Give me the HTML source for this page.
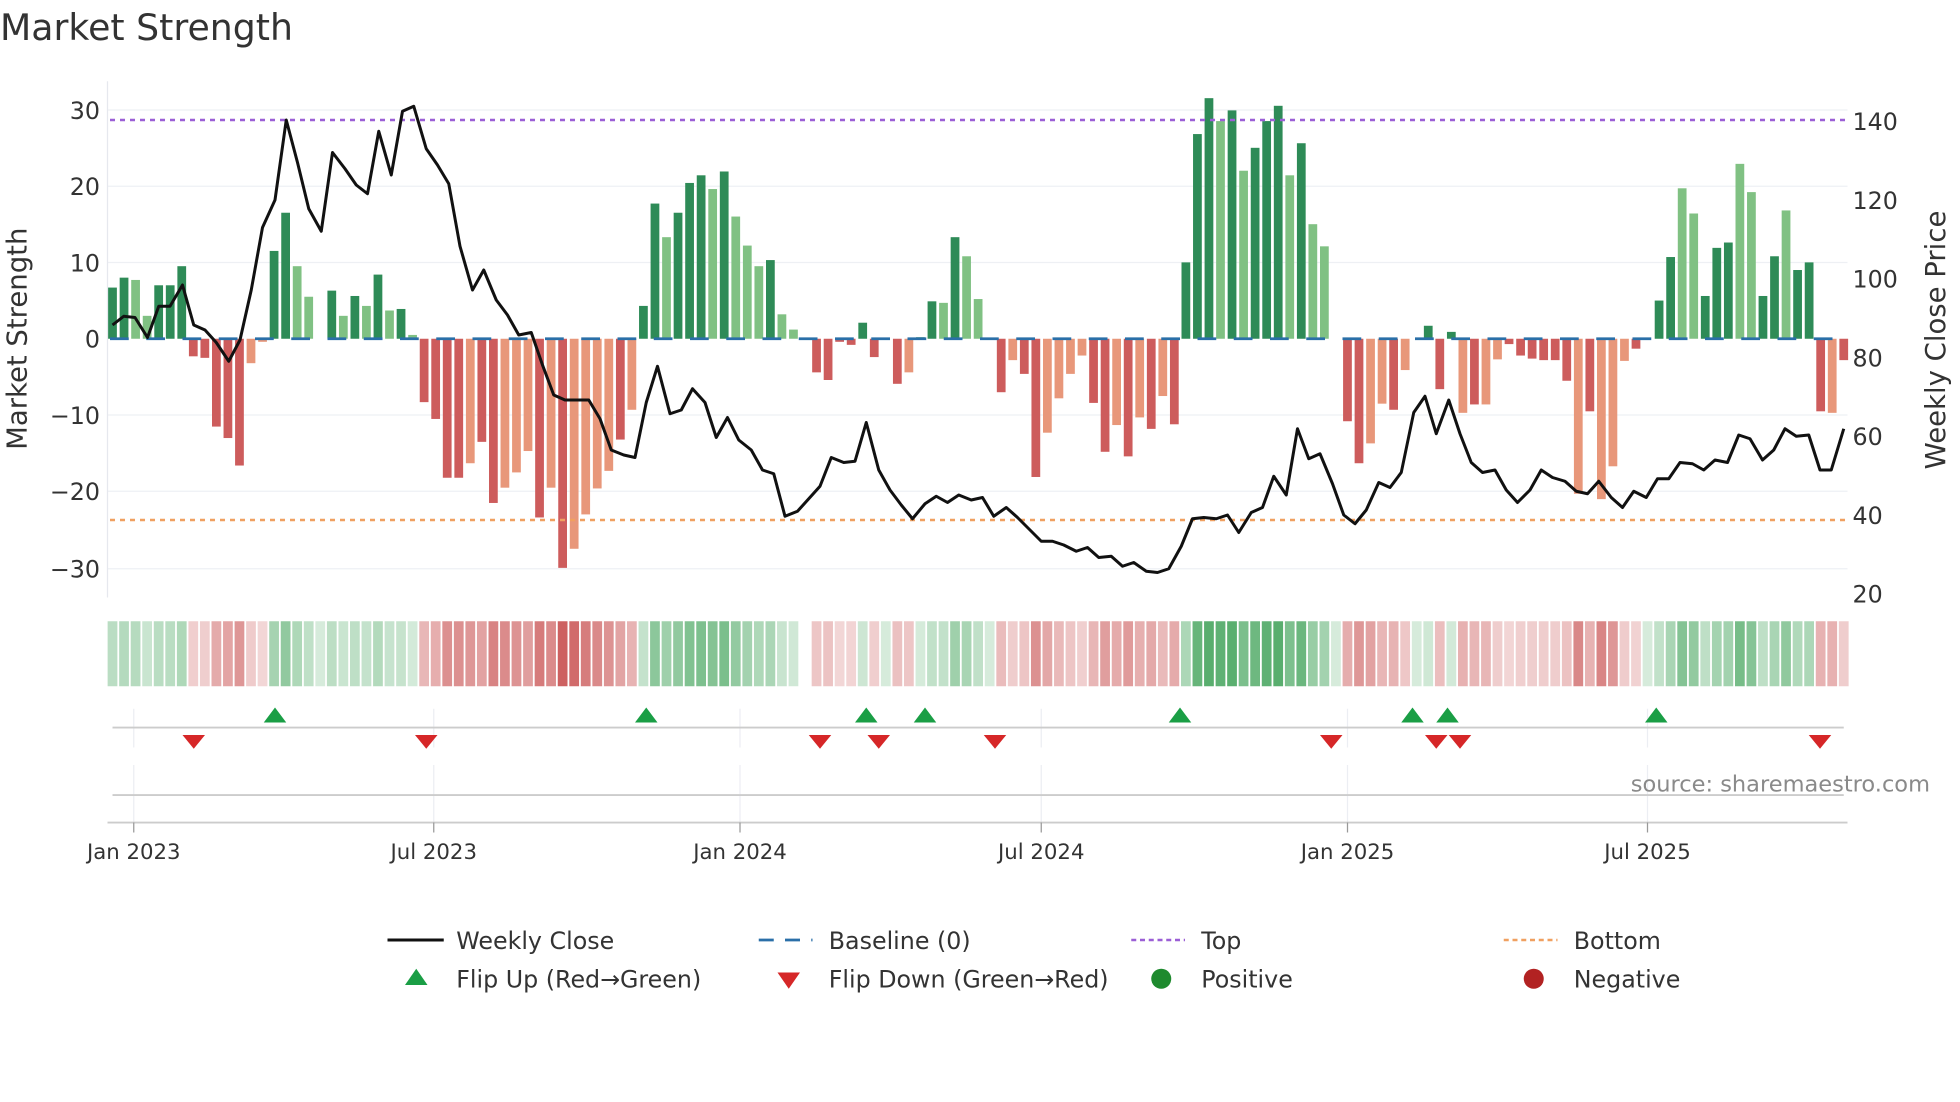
<!DOCTYPE html>
<html><head><meta charset="utf-8"><style>
html,body{margin:0;padding:0;background:#fff;width:1960px;height:1102px;overflow:hidden}
svg{display:block}
text{font-family:"DejaVu Sans","Liberation Sans",sans-serif;fill:#333}
</style></head><body>
<svg id="s" width="1960" height="1102" viewBox="0 0 1568 881.6" xmlns="http://www.w3.org/2000/svg">
<text x="0" y="32" font-size="29" fill="#333">Market Strength</text>
<g stroke="#eef0f4" stroke-width="1">
<line x1="86" x2="1478" y1="88" y2="88"/><line x1="86" x2="1478" y1="149" y2="149"/><line x1="86" x2="1478" y1="210" y2="210"/><line x1="86" x2="1478" y1="332" y2="332"/><line x1="86" x2="1478" y1="393" y2="393"/><line x1="86" x2="1478" y1="455" y2="455"/>
</g>
<line x1="86" x2="86" y1="65" y2="478" stroke="#e6e8ee"/>
<g id="bars"></g>
<g id="strip"></g>
<line x1="88" x2="1478" y1="271" y2="271" stroke="#2a6fa8" stroke-width="2.2" stroke-dasharray="15,14"/>
<line x1="88" x2="1478" y1="96" y2="96" stroke="#9b5fd6" stroke-width="2" stroke-dasharray="4,4"/>
<line x1="88" x2="1478" y1="416" y2="416" stroke="#f0a060" stroke-width="2" stroke-dasharray="4,4"/>
<polyline id="price" fill="none" stroke="#111" stroke-width="2.4" stroke-linejoin="round"/>
<g font-size="19" text-anchor="end">
<text x="80" y="95">30</text><text x="80" y="156">20</text><text x="80" y="217">10</text><text x="80" y="278">0</text><text x="80" y="339">−10</text><text x="80" y="400">−20</text><text x="80" y="462">−30</text>
</g>
<g font-size="19">
<text x="1482" y="104">140</text><text x="1482" y="167">120</text><text x="1482" y="230">100</text><text x="1482" y="293">80</text><text x="1482" y="356">60</text><text x="1482" y="419">40</text><text x="1482" y="482">20</text>
</g>
<text font-size="22" transform="translate(21,271) rotate(-90)" text-anchor="middle">Market Strength</text>
<text font-size="22" transform="translate(1556,272) rotate(-90)" text-anchor="middle">Weekly Close Price</text>
<g stroke="#eceef3" stroke-width="1">
<line x1="107" x2="107" y1="567" y2="598"/><line x1="347" x2="347" y1="567" y2="598"/><line x1="592" x2="592" y1="567" y2="598"/><line x1="833" x2="833" y1="567" y2="598"/><line x1="1078" x2="1078" y1="567" y2="598"/><line x1="1318" x2="1318" y1="567" y2="598"/>
<line x1="107" x2="107" y1="612" y2="658"/><line x1="347" x2="347" y1="612" y2="658"/><line x1="592" x2="592" y1="612" y2="658"/><line x1="833" x2="833" y1="612" y2="658"/><line x1="1078" x2="1078" y1="612" y2="658"/><line x1="1318" x2="1318" y1="612" y2="658"/>
</g>
<line x1="90" x2="1475" y1="582" y2="582" stroke="#ccc" stroke-width="1.5"/>
<line x1="90" x2="1475" y1="636" y2="636" stroke="#ccc" stroke-width="1.5"/>
<line x1="86" x2="1478" y1="658" y2="658" stroke="#ccc" stroke-width="1.5"/>
<g stroke="#999" stroke-width="1"><line x1="107" x2="107" y1="658" y2="666"/><line x1="347" x2="347" y1="658" y2="666"/><line x1="592" x2="592" y1="658" y2="666"/><line x1="833" x2="833" y1="658" y2="666"/><line x1="1078" x2="1078" y1="658" y2="666"/><line x1="1318" x2="1318" y1="658" y2="666"/></g>
<g id="marks"></g>
<text x="1544" y="633" font-size="18" style="fill:#8a8a8a" text-anchor="end">source: sharemaestro.com</text>
<g font-size="17" text-anchor="middle">
<text x="107" y="687">Jan 2023</text><text x="347" y="687">Jul 2023</text><text x="592" y="687">Jan 2024</text><text x="833" y="687">Jul 2024</text><text x="1078" y="687">Jan 2025</text><text x="1318" y="687">Jul 2025</text>
</g>
<g font-size="19">
<line x1="310" x2="355" y1="752" y2="752" stroke="#111" stroke-width="2.4"/><text x="365" y="759">Weekly Close</text>
<line x1="607" x2="650" y1="752" y2="752" stroke="#2a6fa8" stroke-width="2.2" stroke-dasharray="12,9"/><text x="663" y="759">Baseline (0)</text>
<line x1="905" x2="948" y1="752" y2="752" stroke="#9b5fd6" stroke-width="2" stroke-dasharray="4,3"/><text x="961" y="759">Top</text>
<line x1="1203" x2="1246" y1="752" y2="752" stroke="#f0a060" stroke-width="2" stroke-dasharray="4,3"/><text x="1259" y="759">Bottom</text>
<polygon points="324,788 342,788 333,775" fill="#1a9e45"/><text x="365" y="790">Flip Up (Red→Green)</text>
<polygon points="622,778 640,778 631,791" fill="#d62728"/><text x="663" y="790">Flip Down (Green→Red)</text>
<circle cx="929" cy="783" r="8" fill="#1e8a2e"/><text x="961" y="790">Positive</text>
<circle cx="1227" cy="783" r="8" fill="#b22222"/><text x="1259" y="790">Negative</text>
</g>
</svg>
<script>
var V=[6.7,8,7.7,3,7,7,9.5,-2.3,-2.5,-11.5,-13,-16.6,-3.2,-0.4,11.5,16.5,9.5,5.5,0,6.3,3,5.6,4.3,8.4,3.7,3.9,0.5,-8.3,-10.5,-18.2,-18.2,-16.3,-13.5,-21.5,-19.5,-17.5,-14.7,-23.4,-19.5,-30,-27.5,-23,-19.6,-17.3,-13.2,-9.3,4.3,17.7,13.3,16.5,20.4,21.4,19.6,21.9,16,12.2,9.5,10.3,3.2,1.2,0,-4.4,-5.4,-0.4,-0.8,2.1,-2.4,0,-5.9,-4.4,0.2,4.9,4.7,13.3,10.8,5.2,0,-7,-2.8,-4.6,-18.1,-12.3,-7.8,-4.6,-2.2,-8.4,-14.8,-11.3,-15.4,-10.3,-11.8,-7.5,-11.2,10,26.8,31.5,28.5,29.9,22,25,28.5,30.5,21.4,25.6,15,12.1,0,-10.8,-16.3,-13.7,-8.5,-9.3,-4.1,0,1.7,-6.6,0.9,-9.7,-8.6,-8.6,-2.7,-0.7,-2.2,-2.6,-2.8,-2.8,-5.5,-20.3,-9.5,-21,-16.7,-2.9,-1.3,0,5,10.7,19.7,16.4,5.6,11.9,12.6,22.9,19.2,5.6,10.8,16.8,9,10,-9.5,-9.7,-2.8];
var L=[0,0,1,1,0,0,0,0,0,0,0,0,1,1,0,0,1,1,0,0,1,0,1,0,1,0,1,0,0,0,0,1,0,0,1,1,1,0,1,0,1,1,1,1,0,1,0,0,1,0,0,0,1,0,1,1,1,0,1,1,0,0,0,0,0,0,0,0,0,1,0,0,1,0,1,1,0,0,1,0,0,1,1,1,1,0,0,1,0,1,0,1,0,0,0,0,1,0,1,0,0,0,1,0,1,1,0,0,0,1,1,0,1,0,0,0,0,1,0,1,1,0,0,0,0,0,0,1,0,1,1,1,0,0,0,0,1,1,0,0,0,1,1,0,0,1,0,0,0,1];
var ns="http://www.w3.org/2000/svg",bars=document.getElementById('bars'),strip=document.getElementById('strip');
function R(p,x,y,w,h,c){var r=document.createElementNS(ns,'rect');r.setAttribute('x',x);r.setAttribute('y',y);r.setAttribute('width',w);r.setAttribute('height',h);r.setAttribute('fill',c);p.appendChild(r);}
var N=V.length,step=1385/(N-1);
for(var i=0;i<N;i++){var x=90+i*step,v=V[i],h=Math.abs(v)*6.11;
 var c=v>=0?(L[i]?'#80c183':'#2e8b57'):(L[i]?'#e8977a':'#cd5c5c');
 if(h>0.3)R(bars,x-3.5,v>=0?271-h:271,7,h,c);
 var a=Math.min(1,0.25+Math.abs(v)/30*0.75);
 if(i==60)continue;
 var sc=v>=0?'rgba(60,160,85,'+(a*0.85)+')':'rgba(200,80,80,'+(a*0.9)+')';
 R(strip,x-3.9,497,7.8,52,sc);}
var P=[[90,260],[99,253],[108,254],[118,270],[127,245],[136,245],[146,228],[155,260],[164,264],[173,274],[183,289],[192,272],[201,232],[210,182],[220,160],[229,96],[238,130],[247,167],[257,185],[266,122],[276,135],[285,148],[294,155],[303,105],[313,140],[322,89],[331,85],[341,119],[350,132],[359,147],[368,197],[378,232],[387,216],[397,240],[406,252],[415,268],[425,266],[434,292],[443,316],[452,320],[462,320],[471,320],[480,335],[489,360],[499,364],[508,366],[517,322],[526,293],[536,331],[545,328],[554,311],[564,322],[573,350],[582,334],[591,352],[601,360],[610,376],[619,379],[628,413],[638,409],[647,399],[656,389],[665,366],[675,370],[684,369],[693,338],[703,376],[712,392],[721,404],[730,415],[740,403],[749,397],[758,402],[767,396],[777,400],[786,398],[795,413],[805,406],[814,414],[824,424],[833,433],[842,433],[851,436],[861,441],[870,438],[879,446],[889,445],[898,453],[907,450],[917,457],[926,458],[935,455],[945,437],[954,415],[963,414],[973,415],[982,412],[991,426],[1001,410],[1010,406],[1019,381],[1029,396],[1038,343],[1047,367],[1056,363],[1066,387],[1075,412],[1084,419],[1093,408],[1103,386],[1112,390],[1121,378],[1131,330],[1140,317],[1149,347],[1159,320],[1168,347],[1177,370],[1186,378],[1196,376],[1205,392],[1214,402],[1224,392],[1233,376],[1242,382],[1252,385],[1261,393],[1270,395],[1279,385],[1289,398],[1298,406],[1307,393],[1317,398],[1326,383],[1335,383],[1344,370],[1354,371],[1363,376],[1372,368],[1382,370],[1391,348],[1400,351],[1410,368],[1419,360],[1428,343],[1437,349],[1447,348],[1456,376],[1465,376],[1475,343]];
document.getElementById('price').setAttribute('points',P.map(function(p){return p.join(',')}).join(' '));
var m=document.getElementById('marks'),s='';
[220,517,693,740,944,1130,1158,1325].forEach(function(x){s+='<polygon points="'+(x-9)+',578 '+(x+9)+',578 '+x+',566" fill="#1a9e45"/>';});
[155,341,656,703,796,1065,1149,1168,1456].forEach(function(x){s+='<polygon points="'+(x-9)+',588 '+(x+9)+',588 '+x+',599" fill="#d62728"/>';});
m.innerHTML=s;
</script>
</body></html>
